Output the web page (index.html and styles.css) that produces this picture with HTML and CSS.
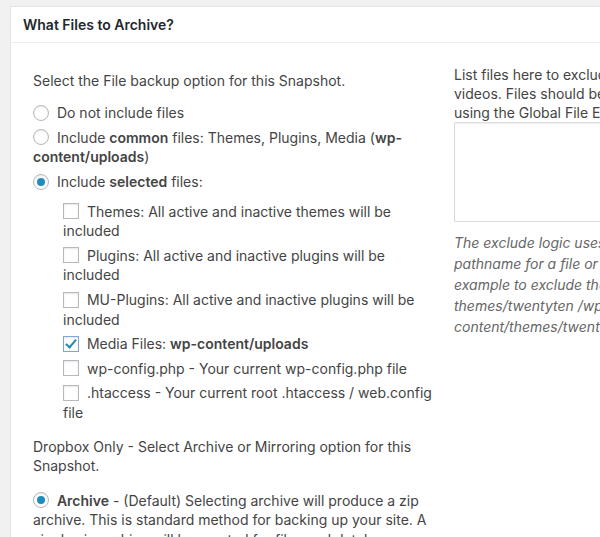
FILE: index.html
```html
<!DOCTYPE html>
<html>
<head>
    <title>Snapshot - What Files to Archive?</title>
    <link rel="stylesheet" href="styles.css">
</head>
<body>
    <div class="postbox">
        <h2 class="hndle">What Files to Archive?</h2>
        <div class="inside">
            <div class="col-left">
                <p class="intro">Select the File backup option for this Snapshot.</p>

                <label class="opt"><input type="radio" name="files-option" value="none"> Do not include files</label>
                <label class="opt"><input type="radio" name="files-option" value="common"> Include <strong>common</strong> files: Themes, Plugins, Media (<strong>wp-content/uploads</strong>)</label>
                <label class="opt"><input type="radio" name="files-option" value="selected" checked> Include <strong>selected</strong> files:</label>

                <div class="sub-list">
                    <label class="opt"><input type="checkbox" name="files-sections[]" value="themes"> Themes: All active and inactive themes will be included</label>
                    <label class="opt"><input type="checkbox" name="files-sections[]" value="plugins"> Plugins: All active and inactive plugins will be included</label>
                    <label class="opt"><input type="checkbox" name="files-sections[]" value="mu-plugins"> MU-Plugins: All active and inactive plugins will be included</label>
                    <label class="opt"><input type="checkbox" name="files-sections[]" value="media" checked> Media Files: <strong>wp-content/uploads</strong></label>
                    <label class="opt"><input type="checkbox" name="files-sections[]" value="config"> wp-config.php - Your current wp-config.php file</label>
                    <label class="opt"><input type="checkbox" name="files-sections[]" value="htaccess"> .htaccess - Your current root .htaccess / web.config file</label>
                </div>

                <p class="section-note">Dropbox Only - Select Archive or Mirroring option for this Snapshot.</p>

                <label class="opt"><input type="radio" name="sync-option" value="archive" checked> <strong>Archive</strong> - (Default) Selecting archive will produce a zip archive. This is standard method for backing up your site. A single zip archive will be created for files and database tables.</label>
                <label class="opt"><input type="radio" name="sync-option" value="mirror"> <strong>Mirroring</strong> - Selecting mirroring will copy the files to Dropbox as they are on the server.</label>
            </div>

            <div class="col-right">
                <p class="lead">List files here to exclude from this snapshot, such as large<br>
                videos. Files should be listed one per line or excluded by<br>
                using the Global File Exclusions setting.</p>
                <textarea name="files-ignore" class="ignore-list"></textarea>
                <p class="description">The exclude logic uses pattern matching. So instead of a<br>
                pathname for a file or directory you can enter a part. For<br>
                example to exclude the theme twentyten you could enter<br>
                themes/twentyten /wp-<br>
                content/themes/twentyten</p>
            </div>
        </div>
    </div>
</body>
</html>
```

FILE: styles.css
```css
html, body { overflow: hidden; }
body { margin: 0; background: #f1f1f1; color: #444; font-family: Inter, "Noto Sans", sans-serif; font-size: 14px; line-height: 1.4; }

.postbox { width: 872px; margin: 6px 0 0 10px; background: #fff; border: 1px solid #e5e5e5; box-shadow: 0 1px 1px rgba(0,0,0,.04); }
.hndle { margin: 0; padding: 8px 12px 7px; font-size: 14px; font-weight: 600; line-height: 1.4; color: #23282d; border-bottom: 1px solid #eee; }

.inside { display: grid; grid-template-columns: 403px 403px; column-gap: 18px; padding: 22px 22px 12px; }

.intro { margin: 6px 0 13px; }
.section-note { margin: 14px 0 15px; }
.opt { display: block; margin-bottom: 5px; }
.opt strong { font-weight: 600; }
.sub-list { margin-top: 10px; padding-left: 30px; }

input[type=radio], input[type=checkbox] { -webkit-appearance: none; appearance: none; position: relative; display: inline-block; width: 16px; height: 16px; margin: -3px 4px 0 0; vertical-align: middle; border: 1px solid #b4b9be; background: #fff; box-shadow: inset 0 1px 2px rgba(0,0,0,.1); box-sizing: border-box; }
input[type=radio] { border-radius: 50%; }
input[type=radio]:checked::before { content: ""; position: absolute; left: 3px; top: 3px; width: 8px; height: 8px; border-radius: 50%; background: #1e8cbe; }
input[type=checkbox]:checked { border-color: #7fa7cf; }
input[type=checkbox]:checked::before { content: ""; position: absolute; left: 4px; top: 0; width: 4px; height: 9px; border: solid #1e8cbe; border-width: 0 2.5px 2.5px 0; transform: rotate(40deg); }

.lead { margin: 0; line-height: 19px; }
.ignore-list { display: block; width: 403px; height: 100px; margin: 0; border: 1px solid #ddd; box-shadow: inset 0 1px 2px rgba(0,0,0,.07); resize: none; font: inherit; box-sizing: border-box; }
.description { margin: 10px 0 0; color: #666; font-style: italic; line-height: 21px; }
```
